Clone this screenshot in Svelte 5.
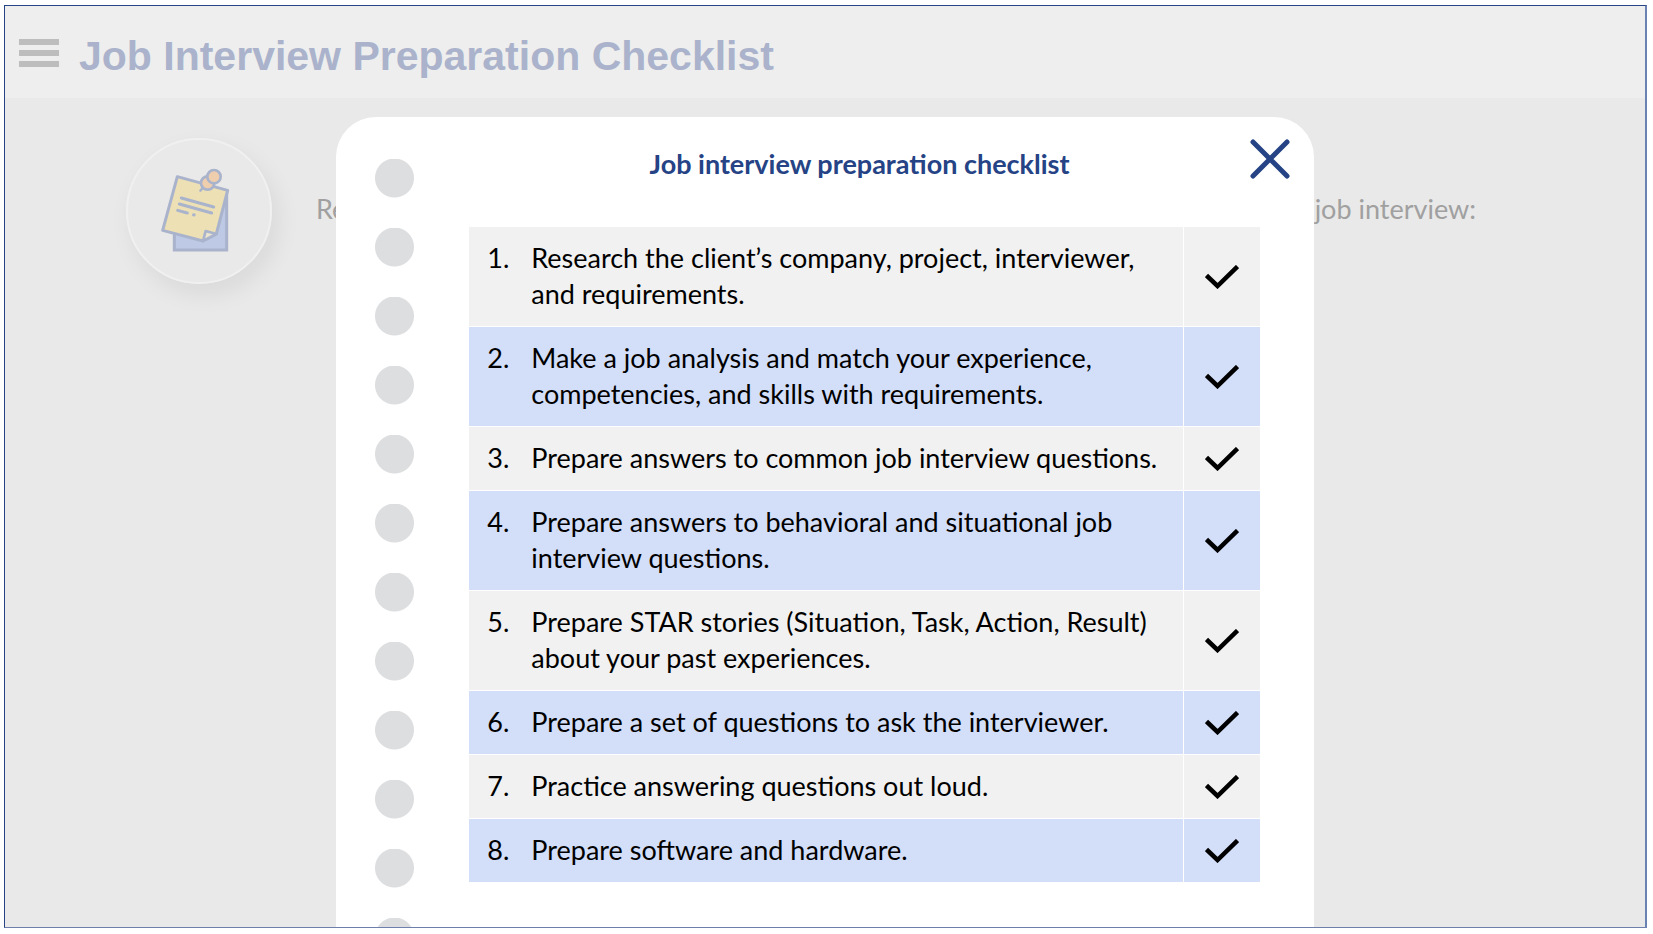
<script>
  const items = [
    'Research the client’s company, project, interviewer, and requirements.',
    'Make a job analysis and match your experience, competencies, and skills with requirements.',
    'Prepare answers to common job interview questions.',
    'Prepare answers to behavioral and situational job interview questions.',
    'Prepare STAR stories (Situation, Task, Action, Result) about your past experiences.',
    'Prepare a set of questions to ask the interviewer.',
    'Practice answering questions out loud.',
    'Prepare software and hardware.'
  ];
</script>

<div class="page">
  <div class="frame">
    <div class="backdrop">
      <header>
        <button class="menu" aria-label="Menu">
          <span></span><span></span><span></span>
        </button>
        <h1>Job Interview Preparation Checklist</h1>
      </header>
      <main>
        <div class="badge">
          <svg viewBox="477 498 240 270" width="80" height="90" aria-hidden="true">
            <g stroke="#aab3cc" stroke-width="9" stroke-linejoin="round" stroke-linecap="round">
              <path d="M523 640V750H680V575Z" fill="#bec9e6" stroke-linejoin="miter" />
              <path d="M532 530L683 571L649 702L609 723L488 691Z" fill="#ede0b5" />
              <path d="M609 723L617 693L649 702Z" fill="#ebe5d0" stroke-width="8" />
              <path d="M544 594L641 621M538 612L635 639M533 631L562 639" fill="none" />
              <path d="M581 644.500h1" stroke-width="10" />
              <path d="M614 558L601 572" fill="none" stroke-width="7" />
              <circle cx="623" cy="549" r="20" fill="#efceae" stroke-width="8" />
              <circle cx="642" cy="530" r="20" fill="#efceae" stroke-width="8" />
            </g>
          </svg>
        </div>
        <p class="intro"><span>Re</span><span>job interview:</span></p>
      </main>
    </div>

    <div class="dialog" role="dialog" aria-labelledby="dialog-title">
      <div class="holes"></div>
      <div class="content">
        <div class="heading">
          <h2 id="dialog-title">Job interview preparation checklist</h2>
          <button class="close" aria-label="Close">
            <svg viewBox="0 0 40 40" width="40" height="40" aria-hidden="true">
              <path d="M3 3L37 37M37 3L3 37" stroke="#254385" stroke-width="5" stroke-linecap="round" />
            </svg>
          </button>
        </div>
        <table>
          <tbody>
            {#each items as item, i}
              <tr>
                <td class="number">{i + 1}.</td>
                <td class="text">{item}</td>
                <td class="tick">
                  <svg viewBox="0 0 34 24" width="34" height="24" role="img" aria-label="Done">
                    <path d="M1.500 10.500L12.500 21L32.500 1.500" fill="none" stroke="#000" stroke-width="4.500" />
                  </svg>
                </td>
              </tr>
            {/each}
          </tbody>
        </table>
      </div>
    </div>
  </div>
</div>

<style>
  :global(body) {
    margin: 0;
    background: #fff;
  }
  .page {
    box-sizing: border-box;
    min-height: 100vh;
    padding: 5px 6px 6px 4px;
    display: flex;
    font-family: Lato, "Noto Sans", sans-serif;
    font-size: 27px;
    line-height: 36px;
    color: #000;
  }
  .frame {
    flex: 1;
    min-width: 0;
    display: grid;
    grid-template-columns: minmax(0, 1fr);
    border: 1px solid #254385;
    border-right: 2px solid #6a82b3;
    border-bottom-color: #6e7fae;
    background: #e9e9e9;
  }
  .backdrop,
  .dialog {
    grid-area: 1 / 1;
  }
  header {
    box-sizing: border-box;
    height: 92px;
    padding: 8px 14px 0;
    display: flex;
    align-items: center;
    gap: 20px;
    background: #eee;
  }
  button {
    padding: 0;
    border: 0;
    background: none;
    cursor: pointer;
  }
  .menu {
    width: 40px;
    margin-bottom: 6px;
    display: grid;
    gap: 5px;
  }
  .menu span {
    height: 6px;
    background: #bdbdbd;
  }
  h1 {
    margin: 0;
    font: bold 41px/48px "Liberation Sans", Arial, sans-serif;
    color: #aab3cb;
  }
  main {
    display: flex;
    align-items: center;
    gap: 44px;
    padding: 40px 169px 0 121px;
  }
  .badge {
    box-sizing: border-box;
    flex: none;
    width: 146px;
    height: 146px;
    display: grid;
    place-items: center;
    border: 2px solid #f0f0f0;
    border-radius: 50%;
    box-shadow: 6px 10px 24px rgba(0, 0, 0, 0.07);
  }
  .intro {
    flex: 1;
    margin: 0;
    padding-bottom: 4px;
    display: flex;
    justify-content: space-between;
    color: #a0a0a0;
  }
  .dialog {
    position: relative;
    box-sizing: border-box;
    width: 59.6%;
    margin: 111px auto 0;
    padding: 0 24px 0 39px;
    display: grid;
    grid-template-columns: 39px minmax(0, 1fr);
    column-gap: 55px;
    border-radius: 40px 40px 0 0;
    background: #fff;
  }
  .holes {
    margin-top: 42px;
    background: radial-gradient(circle at 50% 19px, #dddee0 19px, transparent 20px) top center / 39px 69px repeat-y;
  }
  .content {
    padding-bottom: 40px;
  }
  .heading {
    box-sizing: border-box;
    display: grid;
    grid-template-columns: 1fr auto;
    align-items: start;
    padding-top: 22px;
    height: 110px;
  }
  h2 {
    margin: 7px 0 0;
    font-size: 27px;
    line-height: 36px;
    font-weight: bold;
    text-align: center;
    color: #254385;
  }
  .close {
    display: block;
    height: 40px;
  }
  .close svg {
    display: block;
  }
  table {
    width: calc(100% - 30px);
    border-collapse: collapse;
  }
  tr {
    background: #f1f1f1;
    border-bottom: 1px solid #fff;
  }
  tr:nth-child(even) {
    background: #d3def8;
  }
  td {
    padding: 13px 0 14px;
    vertical-align: top;
  }
  .number {
    width: 44px;
    padding-left: 18px;
  }
  .text {
    padding-right: 16px;
  }
  .tick {
    width: 76px;
    padding: 0;
    vertical-align: middle;
    text-align: center;
    border-left: 1px solid #fff;
  }
  .tick svg {
    display: block;
    margin: 0 auto;
  }
</style>
